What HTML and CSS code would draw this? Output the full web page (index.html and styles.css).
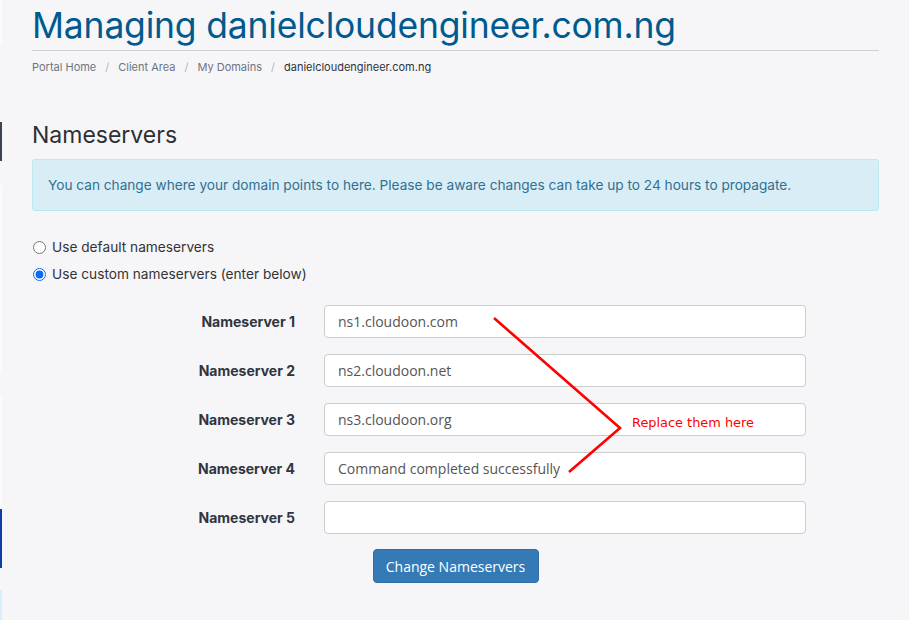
FILE: index.html
```html
<!DOCTYPE html>
<html>
<head>
<meta charset="utf-8">
<link rel="stylesheet" href="styles.css">
</head>
<body>
<div class="page">
  <aside class="edge">
    <div class="edge-panel p1"></div>
    <div class="edge-bar dark"></div>
    <div class="edge-panel p2"></div>
    <div class="edge-panel p3"></div>
    <div class="edge-bar blue"></div>
    <div class="edge-bar light"></div>
  </aside>
  <main class="main">
    <h1 class="title">Managing danielcloudengineer.com.ng</h1>
    <nav class="crumbs">
      <span class="crumb">Portal Home</span><span class="sep">/</span>
      <span class="crumb">Client Area</span><span class="sep">/</span>
      <span class="crumb">My Domains</span><span class="sep">/</span>
      <span class="crumb active">danielcloudengineer.com.ng</span>
    </nav>
    <h2 class="section">Nameservers</h2>
    <div class="alert">You can change where your domain points to here. Please be aware changes can take up to 24 hours to propagate.</div>
    <div class="radios">
      <label class="radio"><input type="radio" name="ns"> Use default nameservers</label>
      <label class="radio"><input type="radio" name="ns" checked> Use custom nameservers (enter below)</label>
    </div>
    <form class="nsform">
      <div class="row"><label class="lbl">Nameserver 1</label><input class="field" value="ns1.cloudoon.com"></div>
      <div class="row"><label class="lbl">Nameserver 2</label><input class="field" value="ns2.cloudoon.net"></div>
      <div class="row"><label class="lbl">Nameserver 3</label><input class="field" value="ns3.cloudoon.org"></div>
      <div class="row"><label class="lbl">Nameserver 4</label><input class="field" value="Command completed successfully"></div>
      <div class="row"><label class="lbl">Nameserver 5</label><input class="field" value=""></div>
      <div class="actions"><button type="button" class="btn">Change Nameservers</button></div>
    </form>
  </main>
  <div class="annot">
    <svg width="909" height="620" viewBox="0 0 909 620">
      <polyline points="494,318 620,428 569,472" fill="none" stroke="#ff0000" stroke-width="2.6" stroke-linejoin="miter"/>
    </svg>
    <span class="annot-text">Replace them here</span>
  </div>
</div>
</body>
</html>
```
FILE: styles.css
```css
html, body {
  margin: 0;
  padding: 0;
  background: #f6f6f9;
}
body {
  font-family: "Inter", "Noto Sans", sans-serif;
  color: #333;
}
.page {
  position: relative;
  display: flex;
  width: 909px;
  height: 620px;
  overflow: hidden;
}
.edge {
  width: 3px;
  display: flex;
  flex-direction: column;
  flex: none;
}
.edge-panel {
  background: #fbfbfc;
  width: 2px;
}
.p1 { height: 44px; margin-bottom: 78px; }
.edge-bar { width: 2px; }
.dark { height: 40px; background: #3d4450; }
.p2 { height: 190px; margin-top: 24px; }
.p3 { height: 110px; margin-top: 22px; }
.blue { height: 60px; margin-top: 4px; background: #0a3fa8; }
.light { height: 30px; margin-top: 22px; background: #d6eefa; }

.main {
  width: 847px;
  padding-left: 29px;
  flex: none;
}
.title {
  margin: 0;
  padding-top: 2px;
  font-family: "Inter", sans-serif;
  font-weight: 400;
  font-size: 35.5px;
  line-height: 47px;
  color: #005a8f;
  letter-spacing: -0.2px;
  border-bottom: 1px solid #cfcfd2;
  padding-bottom: 1px;
}
.crumbs {
  display: flex;
  align-items: center;
  height: 31px;
  font-size: 11px;
  color: #6c757d;
}
.sep {
  color: #b0b4b8;
  margin: 0 9px;
}
.crumb.active { color: #2b3440; }
.section {
  margin: 38px 0 0;
  font-weight: 400;
  font-size: 23px;
  line-height: 30px;
  color: #2c2f33;
}
.alert {
  margin-top: 9px;
  box-sizing: border-box;
  height: 52px;
  padding: 15px 15px;
  background: #d9edf7;
  border: 1px solid #bce8f1;
  border-radius: 3px;
  color: #31708f;
  font-size: 13.65px;
  line-height: 20px;
}
.radios {
  margin-top: 26px;
  display: flex;
  flex-direction: column;
  gap: 7px;
}
.radio {
  display: flex;
  align-items: center;
  height: 20px;
  font-size: 13.7px;
  color: #333;
}
.radio input {
  margin: 0 6px 0 1px;
  width: 13px;
  height: 13px;
  accent-color: #0a6cf0;
}
.nsform {
  margin-top: 21px;
  display: flex;
  flex-direction: column;
  gap: 16px;
}
.row {
  display: flex;
  align-items: center;
}
.lbl {
  width: 263px;
  margin-right: 29px;
  text-align: right;
  font-weight: 700;
  font-size: 14px;
  color: #2f3540;
}
.field {
  box-sizing: border-box;
  width: 482px;
  height: 33px;
  padding: 0 13px;
  border: 1px solid #ccc;
  border-radius: 4px;
  background: #fff;
  font-family: "Open Sans", sans-serif;
  font-size: 14px;
  color: #555;
  outline: none;
}
.actions {
  display: flex;
  justify-content: center;
  margin-top: -1px;
}
.btn {
  width: 166px;
  height: 34px;
  background: #337ab7;
  border: 1px solid #2e6da4;
  border-radius: 4px;
  color: #fff;
  font-family: "Open Sans", sans-serif;
  font-size: 14px;
  padding: 0;
}
.annot {
  position: absolute;
  left: 0;
  top: 0;
  width: 909px;
  height: 620px;
  pointer-events: none;
}
.annot svg { position: absolute; left: 0; top: 0; }
.annot-text {
  position: absolute;
  left: 632px;
  top: 415px;
  font-family: "DejaVu Sans", sans-serif;
  font-size: 12.9px;
  color: #ff0000;
}
```
